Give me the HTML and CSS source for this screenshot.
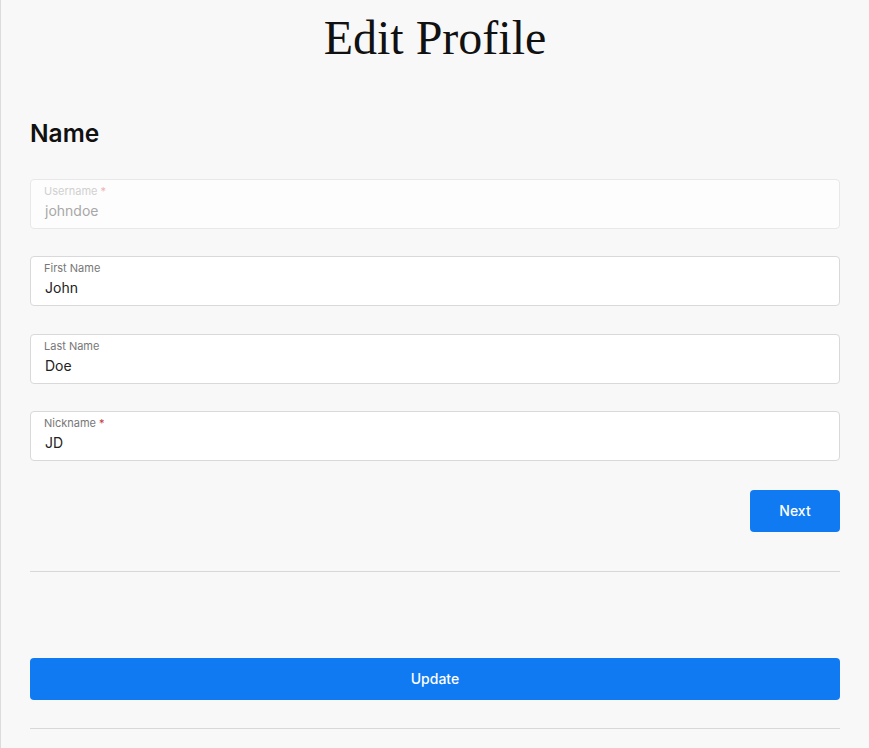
FILE: index.html
```html
<!DOCTYPE html>
<html>
<head>
<meta charset="utf-8">
<link rel="stylesheet" href="styles.css">
</head>
<body>
<div class="page">
  <h1 class="title">Edit Profile</h1>
  <h2 class="section">Name</h2>
  <div class="fields">
    <div class="field disabled">
      <div class="label">Username <span class="req">*</span></div>
      <div class="value">johndoe</div>
    </div>
    <div class="field">
      <div class="label">First Name</div>
      <div class="value">John</div>
    </div>
    <div class="field">
      <div class="label">Last Name</div>
      <div class="value">Doe</div>
    </div>
    <div class="field">
      <div class="label">Nickname <span class="req">*</span></div>
      <div class="value">JD</div>
    </div>
  </div>
  <div class="actions">
    <button class="btn next">Next</button>
  </div>
  <hr class="divider first">
  <button class="btn update">Update</button>
  <hr class="divider last">
</div>
</body>
</html>
```
FILE: styles.css
```css
html, body {
  margin: 0;
  padding: 0;
  background: #f8f8f8;
  height: 100%;
}
body {
  border-left: 1px solid #dcdcdc;
  box-sizing: border-box;
  font-family: Inter, "Noto Sans", sans-serif;
}
.page {
  padding: 0 29px 0 29px;
}
.title {
  margin: 0;
  padding-top: 10px;
  text-align: center;
  font-family: "Liberation Serif", serif;
  font-weight: 400;
  font-size: 48px;
  line-height: 56px;
  color: #111;
}
.section {
  margin: 52px 0 0 0;
  font-size: 24.5px;
  line-height: 30px;
  font-weight: 600;
  color: #111;
}
.fields {
  margin-top: 31px;
  display: flex;
  flex-direction: column;
  gap: 27.33px;
}
.field {
  height: 50px;
  box-sizing: border-box;
  background: #fff;
  border: 1px solid #d9d9d9;
  border-radius: 4px;
  padding: 4px 13px 0 13px;
}
.label {
  font-size: 11px;
  line-height: 14px;
  color: #777;
}
.req {
  color: #c0393b;
}
.value {
  margin-top: 4px;
  font-size: 14px;
  line-height: 18px;
  color: #222;
  padding-left: 1px;
}
.field.disabled {
  background: #fdfdfd;
  border-color: #e8e8e8;
}
.field.disabled .label {
  color: #d0d0d0;
}
.field.disabled .req {
  color: #eeb4b4;
}
.field.disabled .value {
  color: #a8a8a8;
}
.actions {
  display: flex;
  justify-content: flex-end;
  margin-top: 29px;
}
.btn {
  background: #0f7af2;
  color: #fff;
  border: none;
  border-radius: 4px;
  font-family: Inter, "Noto Sans", sans-serif;
  font-size: 14px;
  font-weight: 500;
  height: 42px;
  cursor: pointer;
}
.next {
  width: 90px;
}
.divider {
  border: none;
  border-top: 1px solid #d8d8d8;
  margin: 0;
}
.divider.first {
  margin-top: 39px;
}
.update {
  display: block;
  width: 100%;
  margin-top: 86px;
}
.divider.last {
  margin-top: 28px;
}
```
